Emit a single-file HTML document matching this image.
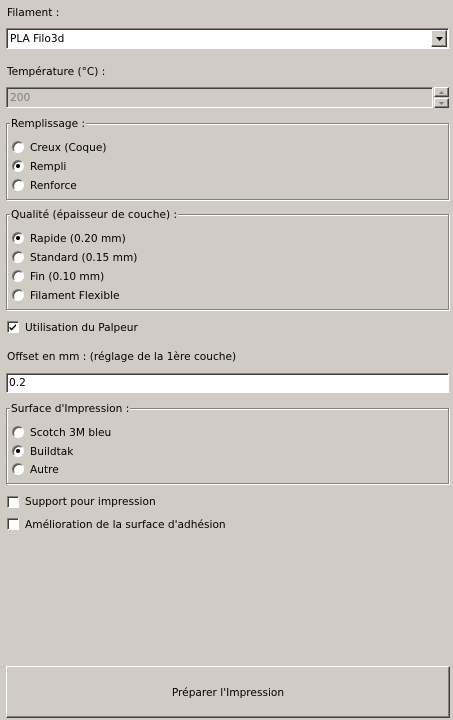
<!DOCTYPE html>
<html><head><meta charset="utf-8"><style>
*{margin:0;padding:0;box-sizing:border-box}
body{width:453px;height:720px;background:#d0ccc5;font-family:"DejaVu Sans","Liberation Sans",sans-serif;font-size:10.6px;color:#000;position:relative;overflow:hidden}
.a{position:absolute;white-space:nowrap;line-height:15px;margin-top:1px}
.sunk{position:absolute;border:1px solid;border-color:#808080 #fff #fff #808080;box-shadow:inset 1px 1px 0 #404040}
.grp{position:absolute;border:1px solid #808080;box-shadow:1px 1px 0 #fff, inset 1px 1px 0 #fff}
.gt{position:absolute;background:#d0ccc5;padding:0 1px;line-height:15px;top:-7px;left:3px}
.r{position:absolute;width:12px;height:12px;border-radius:50%;background:#fff;border:1px solid;border-color:#808080 #fff #fff #808080;box-shadow:inset 1px 1px 0 #404040}
.r.on::after{content:"";position:absolute;left:3px;top:3px;width:4px;height:4px;border-radius:50%;background:#000}
.cb{position:absolute;width:12px;height:12px;background:#fff;border:1px solid;border-color:#808080 #fff #fff #808080;box-shadow:inset 1px 1px 0 #404040}
.btn{position:absolute;border:1px solid;border-color:#fff #404040 #404040 #fff;box-shadow:inset -1px -1px 0 #808080}
</style></head><body>
<div class="a" style="left:7px;top:5px">Filament :</div>
<div class="sunk" style="left:6px;top:28px;width:443px;height:21px;background:#fff">
 <div class="a" style="left:3px;top:2px">PLA Filo3d</div>
 <div class="btn" style="right:1px;top:1px;width:16px;height:17px;background:#d0ccc5">
  <svg width="14" height="15" style="position:absolute;left:0;top:0"><path d="M4 6h7l-3.5 4z" fill="#000"/></svg>
 </div>
</div>
<div class="a" style="left:7px;top:64px">Température (°C) :</div>
<div class="sunk" style="left:6px;top:87px;width:427px;height:21px">
 <div class="a" style="left:3px;top:2px;color:#808080">200</div>
</div>
<div class="btn" style="left:434px;top:87px;width:15px;height:10px;background:#d0ccc5"><svg width="13" height="8" style="position:absolute"><path d="M4 6h5l-2.5-3z" fill="#808080"/></svg></div>
<div class="btn" style="left:434px;top:98px;width:15px;height:10px;background:#d0ccc5"><svg width="13" height="8" style="position:absolute"><path d="M4 3h5l-2.5 3z" fill="#808080"/></svg></div>

<div class="grp" style="left:6px;top:123px;width:443px;height:77px"><div class="gt">Remplissage :</div></div>
<div class="r" style="left:12px;top:141px"></div><div class="a" style="left:30px;top:140px">Creux (Coque)</div>
<div class="r on" style="left:12px;top:160px"></div><div class="a" style="left:30px;top:159px">Rempli</div>
<div class="r" style="left:12px;top:179px"></div><div class="a" style="left:30px;top:178px">Renforce</div>

<div class="grp" style="left:6px;top:214px;width:443px;height:96px"><div class="gt">Qualité (épaisseur de couche) :</div></div>
<div class="r on" style="left:12px;top:232px"></div><div class="a" style="left:30px;top:231px">Rapide (0.20 mm)</div>
<div class="r" style="left:12px;top:251px"></div><div class="a" style="left:30px;top:250px">Standard (0.15 mm)</div>
<div class="r" style="left:12px;top:270px"></div><div class="a" style="left:30px;top:269px">Fin (0.10 mm)</div>
<div class="r" style="left:12px;top:289px"></div><div class="a" style="left:30px;top:288px">Filament Flexible</div>

<div class="cb" style="left:7px;top:321px"><svg width="10" height="10" style="position:absolute;left:0;top:0"><path d="M1.5 4.5l2 2 4.5-4.5v2l-4.5 4.5-2-2z" fill="#000"/></svg></div>
<div class="a" style="left:25px;top:320px">Utilisation du Palpeur</div>
<div class="a" style="left:7px;top:349px">Offset en mm : (réglage de la 1ère couche)</div>
<div class="sunk" style="left:6px;top:373px;width:443px;height:20px;background:#fff"><div class="a" style="left:2px;top:1px">0.2</div></div>

<div class="grp" style="left:6px;top:408px;width:443px;height:76px"><div class="gt">Surface d'Impression :</div></div>
<div class="r" style="left:12px;top:426px"></div><div class="a" style="left:30px;top:425px">Scotch 3M bleu</div>
<div class="r on" style="left:12px;top:445px"></div><div class="a" style="left:30px;top:444px">Buildtak</div>
<div class="r" style="left:12px;top:463px"></div><div class="a" style="left:30px;top:462px">Autre</div>

<div class="cb" style="left:7px;top:496px"></div><div class="a" style="left:25px;top:494px">Support pour impression</div>
<div class="cb" style="left:7px;top:518px"></div><div class="a" style="left:25px;top:517px">Amélioration de la surface d'adhésion</div>

<div class="btn" style="left:6px;top:666px;width:444px;height:52px;background:#d0ccc5"><div class="a" style="left:0;right:0;top:18px;text-align:center">Préparer l'Impression</div></div>
</body></html>
